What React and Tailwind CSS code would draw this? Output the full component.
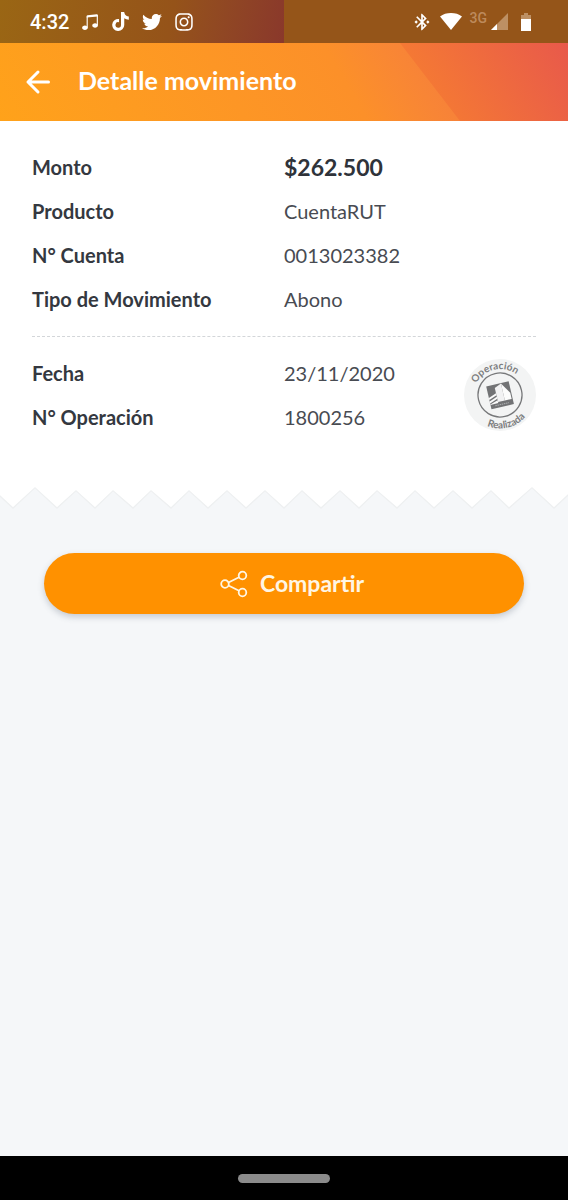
import React from 'react';
import { FaTiktok, FaTwitter, FaInstagram } from 'react-icons/fa';
import { BsMusicNoteBeamed } from 'react-icons/bs';
import { MdBluetoothConnected } from 'react-icons/md';

const amountRows = [
  { label: "Monto", value: "$262.500", strong: true },
  { label: "Producto", value: "CuentaRUT" },
  { label: "N° Cuenta", value: "0013023382" },
  { label: "Tipo de Movimiento", value: "Abono" }
];

const operationRows = [
  { label: "Fecha", value: "23/11/2020" },
  { label: "N° Operación", value: "1800256" }
];

const StatusBar = () => (
  <div className="flex h-[43px] text-white">
    <div className="flex w-1/2 items-center bg-linear-100 from-[#9a6614] via-[#955319] via-60% to-[#8a382b] pl-[30px]">
      <span className="mr-3 font-[Roboto,sans-serif] text-[20px] leading-6 font-medium">4:32</span>
      <div className="flex items-center gap-3">
        <BsMusicNoteBeamed className="size-[18px]" />
        <FaTiktok className="size-[19px]" />
        <FaTwitter className="size-5" />
        <FaInstagram className="size-5" />
      </div>
    </div>
    <div className="flex w-1/2 items-center justify-end bg-[#955519] pr-9">
      <MdBluetoothConnected className="mr-2 size-5" />
      <svg className="mr-2 h-[17px] w-[22px]" viewBox="0 0 22 17" fill="currentColor">
        <path d="M11 17 0 3.500C3 1 7 0 11 0s8 1 11 3.500z" />
      </svg>
      <span className="mr-1 mb-2 font-[Roboto,sans-serif] text-[14px] leading-4 font-medium text-[#bd8a5c]">3G</span>
      <svg className="mr-3 size-[17px]" viewBox="0 0 17 17">
        <path d="M17 0v17H0z" fill="#bd9064" />
        <path d="M6 11v6H0z" fill="#fff" />
      </svg>
      <svg className="h-[18px] w-3" viewBox="0 0 12 18">
        <path d="M4 0h4v2h3v5H1V2h3z" fill="#bd9064" />
        <path d="M1 6h10v12H1z" fill="#fff" />
      </svg>
    </div>
  </div>
);

const Header = () => (
  <header className="relative flex h-[78px] items-center bg-linear-60 from-[#ffa21a] via-[#fc9029] via-60% to-[#ee6a48] px-6 text-white">
    <svg className="absolute top-0 right-0 h-full w-[168px]" viewBox="0 0 168 78" preserveAspectRatio="none">
      <defs>
        <linearGradient id="headerFold" gradientUnits="userSpaceOnUse" x1="40" y1="78" x2="168" y2="0">
          <stop offset="0" stopColor="#f57a33" />
          <stop offset="1" stopColor="#e8594b" />
        </linearGradient>
      </defs>
      <path d="M0 0h168v78H60z" fill="url(#headerFold)" />
    </svg>
    <button type="button" aria-label="Volver" className="relative">
      <svg className="size-7" viewBox="0 0 28 28" fill="none" stroke="currentColor" strokeWidth="3" strokeLinecap="round" strokeLinejoin="round">
        <path d="M24.500 14H4M14 4 4 14l10 10" />
      </svg>
    </button>
    <h1 className="relative mb-1 ml-[26px] text-[25px] leading-8 font-bold">Detalle movimiento</h1>
  </header>
);

const DetailList = ({ rows }) => (
  <dl className="text-[20px] leading-7">
    {rows.map((row) => (
      <div key={row.label} className="flex h-11 items-center">
        <dt className="w-1/2 font-bold text-[#343840]">{row.label}</dt>
        <dd className={row.strong ? "w-1/2 text-[23px] font-bold text-[#2f333a]" : "w-1/2 text-[#484b52]"}>
          {row.value}
        </dd>
      </div>
    ))}
  </dl>
);

const Stamp = () => (
  <svg className="absolute top-2 right-0 size-[72px]" viewBox="0 0 72 72" role="img" aria-label="Operación Realizada">
    <circle cx="36" cy="36" r="36" fill="#f3f4f4" />
    <g transform="rotate(-13 36 36)">
      <path id="stampTop" d="M9 37a27 27 0 0 1 54 0" fill="none" />
      <path id="stampBottom" d="M2.500 36a33.500 33.500 0 0 0 67 0" fill="none" />
      <g fill="#7c7d7e" fontSize="10" fontWeight="700" textAnchor="middle">
        <text><textPath href="#stampTop" startOffset="50%">Operación</textPath></text>
        <text><textPath href="#stampBottom" startOffset="50%">Realizada</textPath></text>
      </g>
      <circle cx="36" cy="36" r="22" fill="none" stroke="#77787a" strokeWidth="1.300" />
      <path d="M24.500 24.500h23V48h-23z" fill="#727375" />
      {/* building */}
      <path d="M32.500 28 39.500 25v17.500h-7z" fill="#f2f2f3" />
      <path d="M39.500 25 46.500 36v6.500h-7z" fill="#fcfcfc" />
      <path d="M24.500 36.500l8-3v2l-8 3zM24.500 40l8-3v2l-8 3zM24.500 43.500v-.5l8-2.500v3z" fill="#fafafa" />
      <path d="M29 45.500h14" stroke="#aeb0b1" strokeWidth="1" strokeDasharray="1.500 0.700" />
    </g>
  </svg>
);

// Torn paper edge under the receipt
const TornEdge = () => (
  <svg className="block h-[22px] w-full" viewBox="0 0 568 22" preserveAspectRatio="none">
    <path
      d="M0 9l13 12L35 0.500 57 21 76 3.500 95 21l18-17.500L133 21l18-17.500L171 21l18-17.500L208 21l19-17.500L246 21l19-17.500L284 21l18-17.500L321 21l19-17.500L359 21l18-17.500L397 21l18-17.500L434 21l19-17.500L472 21l19-17.500L509 21l23-20.500L554 21l14-13"
      fill="none"
      stroke="#eef0f1"
      strokeWidth="1.500"
    />
    <path
      d="M0 0v8l13 12L35 0l22 20L76 3l19 17 18-17 20 17 18-17 20 17 18-17 19 17 19-17 19 17 19-17 19 17 18-17 19 17 19-17 19 17 18-17 20 17 18-17 19 17 19-17 19 17 19-17 18 17 23-20 22 20 14-13V0z"
      fill="#fff"
    />
  </svg>
);

const ShareIcon = () => (
  <svg className="h-7 w-7" viewBox="0 0 28 28" fill="none" stroke="currentColor" strokeWidth="1.800">
    <circle cx="5" cy="14" r="3.800" />
    <circle cx="22.500" cy="5.500" r="3.800" />
    <circle cx="22.500" cy="22.500" r="3.800" />
    <path d="M8.500 12.500 19 7.200M8.500 15.500 19 20.800" />
  </svg>
);

const App = () => {
  return (
    <div className="flex min-h-screen flex-col bg-[#f5f7f9] font-[Lato,sans-serif]">
      <StatusBar />
      <Header />

      <main className="flex-1">
        <div className="bg-white px-8 pt-6 pb-12">
          <DetailList rows={amountRows} />
          <div className="mt-[15px] mb-[14px] border-t border-dashed border-[#d3d6d9]" />
          <div className="relative">
            <DetailList rows={operationRows} />
            <Stamp />
          </div>
        </div>
        <TornEdge />

        <div className="px-11 pt-11">
          <button
            type="button"
            className="flex h-[61px] w-full items-center justify-center gap-3 rounded-full bg-[#ff9100] pl-4 text-[23px] font-bold text-[#fff6e4] shadow-[0_3px_6px_rgba(60,70,90,0.25)]"
          >
            <ShareIcon />
            Compartir
          </button>
        </div>
      </main>

      <div className="flex h-11 items-center justify-center bg-black">
        <div className="h-[9px] w-[92px] rounded-full bg-[#8b8b8b]" />
      </div>
    </div>
  );
};

export default App;
